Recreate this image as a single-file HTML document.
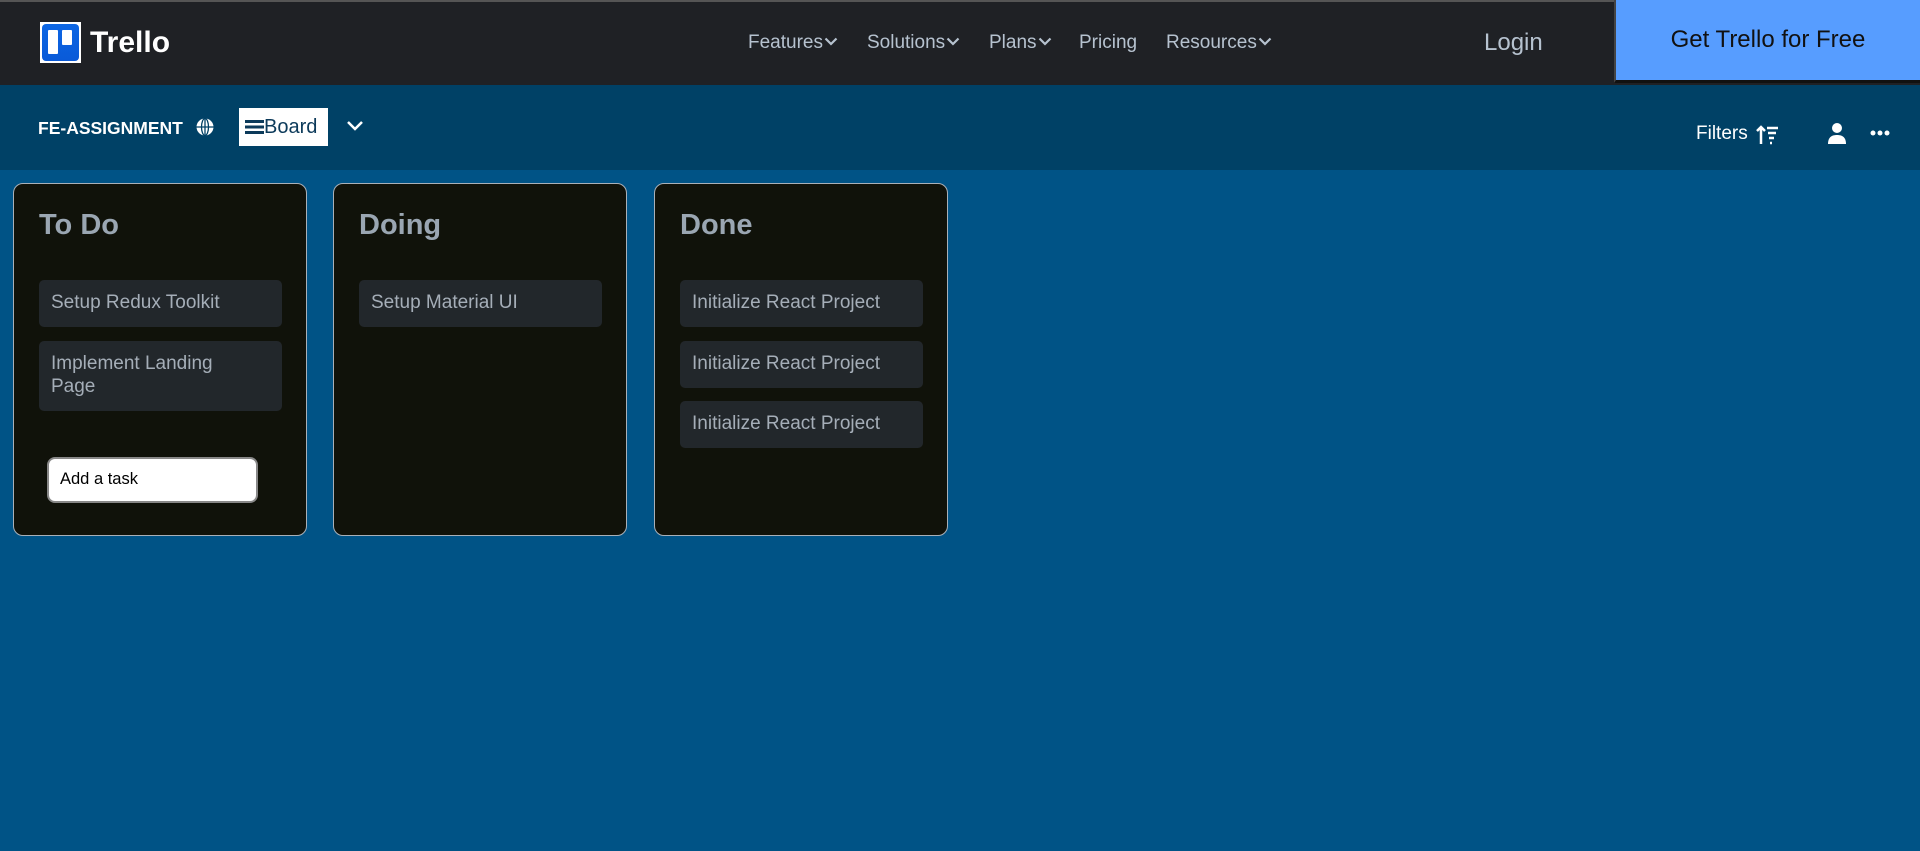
<!DOCTYPE html>
<html><head><meta charset="utf-8"><style>
*{box-sizing:border-box;margin:0;padding:0}
body{width:1920px;height:851px;overflow:hidden;background:#005386;font-family:"Liberation Sans",sans-serif;position:relative}
.hdr{position:absolute;left:0;top:0;width:1920px;height:85px;background:#1f2125;border-top:2px solid #555}
.abs{position:absolute;white-space:nowrap}
.nav{color:#b6c2cf;font-size:19px;top:30px}
.nav svg{vertical-align:2px;margin-left:1px}
.sub{position:absolute;left:0;top:85px;width:1920px;height:85px;background:#004166}
.list{position:absolute;top:183px;width:294px;height:353px;background:#10120a;border:1px solid #a9b0b8;border-radius:10px}
.list h2{position:absolute;left:25px;top:25px;font-size:29px;color:#9aa6b2;font-weight:bold}
.card{position:absolute;left:25px;width:243px;background:#22272b;border-radius:5px;color:#a5aeb8;font-size:19px;padding:11px 30px 11px 12px;line-height:23px}
</style></head><body>
<div class="hdr">
 <div class="abs" style="left:40px;top:20px;width:41px;height:41px;background:#fff;padding:2px">
  <div style="width:37px;height:37px;background:linear-gradient(#0c66e4,#0a5ad8);border-radius:4px;position:relative">
   <div style="position:absolute;left:6px;top:6px;width:10px;height:24px;background:#fff;border-radius:1px"></div>
   <div style="position:absolute;left:20px;top:6px;width:10px;height:15px;background:#fff;border-radius:1px"></div>
  </div>
 </div>
 <div class="abs" style="left:90px;top:24px;color:#fff;font-size:30px;font-weight:bold">Trello</div>
 <div class="abs nav" style="left:748px">Features<svg width="14" height="9" viewBox="0 0 14 9"><path d="M1.5 1.5l5.5 5.5 5.5-5.5" stroke="#b6c2cf" stroke-width="2.2" fill="none"/></svg></div>
 <div class="abs nav" style="left:867px">Solutions<svg width="14" height="9" viewBox="0 0 14 9"><path d="M1.5 1.5l5.5 5.5 5.5-5.5" stroke="#b6c2cf" stroke-width="2.2" fill="none"/></svg></div>
 <div class="abs nav" style="left:989px">Plans<svg width="14" height="9" viewBox="0 0 14 9"><path d="M1.5 1.5l5.5 5.5 5.5-5.5" stroke="#b6c2cf" stroke-width="2.2" fill="none"/></svg></div>
 <div class="abs nav" style="left:1079px">Pricing</div>
 <div class="abs nav" style="left:1166px">Resources<svg width="14" height="9" viewBox="0 0 14 9"><path d="M1.5 1.5l5.5 5.5 5.5-5.5" stroke="#b6c2cf" stroke-width="2.2" fill="none"/></svg></div>
 <div class="abs" style="left:1484px;top:27px;color:#b6c2cf;font-size:24px">Login</div>
 <div class="abs" style="left:1614px;top:-2px;width:306px;height:83px;background:#579dff;border-left:2px solid #444;border-bottom:3px solid #111;color:#111;font-size:24px;text-align:center;line-height:80px">Get Trello for Free</div>
</div>
<div class="sub">
 <div class="abs" style="left:38px;top:33px;color:#fff;font-size:17.5px;font-weight:bold">FE-ASSIGNMENT</div>
 <svg class="abs" style="left:195px;top:32px" width="20" height="20" viewBox="0 0 20 20"><circle cx="10" cy="10" r="8.5" fill="#fff"/><g stroke="#004166" stroke-width="1.3" fill="none"><ellipse cx="10" cy="10" rx="3.5" ry="8.5"/><line x1="10" y1="1.5" x2="10" y2="18.5"/><line x1="1.5" y1="10" x2="18.5" y2="10"/></g></svg>
 <div class="abs" style="left:239px;top:23px;width:89px;height:38px;background:#fff;color:#0c3a5a;font-size:20px;line-height:38px;padding-left:6px">
  <span style="display:inline-block;width:19px;height:14px;vertical-align:-1px;background:linear-gradient(#0c3a5a 0 3px,transparent 3px 5.5px,#0c3a5a 5.5px 8.5px,transparent 8.5px 11px,#0c3a5a 11px 14px)"></span>Board</div>
 <svg class="abs" style="left:346px;top:35px" width="18" height="12" viewBox="0 0 18 12"><path d="M2 2l7 7 7-7" stroke="#fff" stroke-width="2.5" fill="none"/></svg>
 <div class="abs" style="left:1696px;top:38px;color:#fff;font-size:19px">Filters</div>
 <svg class="abs" style="left:1756px;top:39px" width="24" height="22" viewBox="0 0 24 22"><g stroke="#fff" stroke-width="2.5" fill="none"><path d="M5 20V3M1 7l4-4 4 4"/><path d="M11 4h11M12 9h8M13 14h5M14 19h2"/></g></svg>
 <svg class="abs" style="left:1827px;top:37px" width="20" height="22" viewBox="0 0 20 22"><circle cx="10" cy="6" r="5" fill="#fff"/><path d="M1 22c0-7 4-9 9-9s9 2 9 9z" fill="#fff"/></svg>
 <svg class="abs" style="left:1870px;top:45px" width="20" height="6" viewBox="0 0 20 6"><circle cx="3" cy="3" r="2.5" fill="#fff"/><circle cx="10" cy="3" r="2.5" fill="#fff"/><circle cx="17" cy="3" r="2.5" fill="#fff"/></svg>
</div>
<div class="list" style="left:13px">
 <h2>To Do</h2>
 <div class="card" style="top:96px;height:47px">Setup Redux Toolkit</div>
 <div class="card" style="top:157px;height:70px">Implement Landing Page</div>
 <div class="abs" style="left:33px;top:273px;width:211px;height:46px;background:#fff;border:2px solid #888;border-radius:8px;font-size:16.5px;color:#000;padding:11px 11px">Add a task</div>
</div>
<div class="list" style="left:333px">
 <h2>Doing</h2>
 <div class="card" style="top:96px;height:47px">Setup Material UI</div>
</div>
<div class="list" style="left:654px">
 <h2>Done</h2>
 <div class="card" style="top:96px;height:47px">Initialize React Project</div>
 <div class="card" style="top:157px;height:47px">Initialize React Project</div>
 <div class="card" style="top:217px;height:47px">Initialize React Project</div>
</div>
</body></html>
